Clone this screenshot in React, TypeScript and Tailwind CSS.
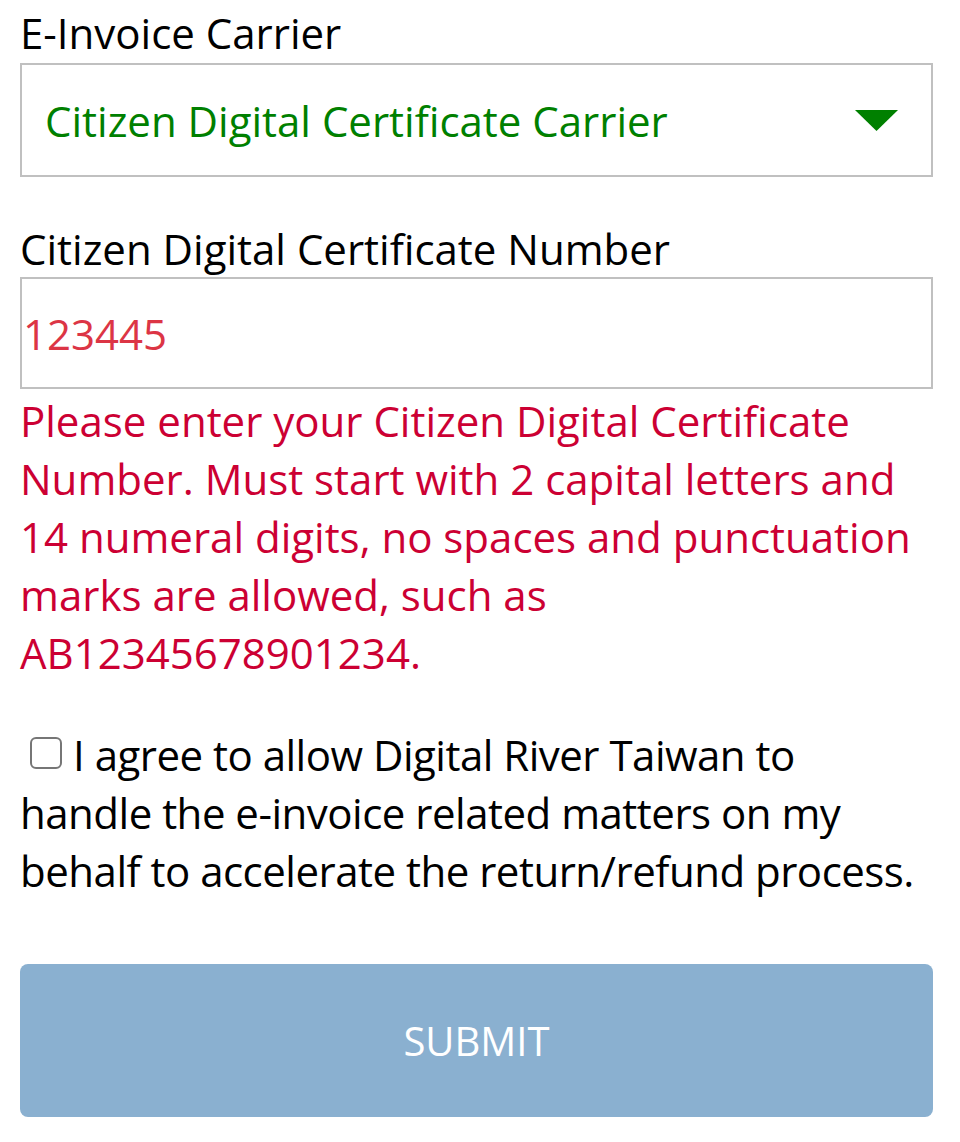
import React, { useState } from 'react';

const font = { fontFamily: '"Open Sans", "Noto Sans", sans-serif' };

export default function App() {
  const [carrier] = useState('Citizen Digital Certificate Carrier');
  const [number, setNumber] = useState('123445');
  const [agree, setAgree] = useState(false);

  return (
    <div className="w-[960px] min-h-[1142px] bg-white pl-[20px] pt-[8px]" style={font}>
      <div className="w-[913px]">
        {/* Carrier select */}
        <label className="block text-[42px] leading-[50px] text-black">E-Invoice Carrier</label>
        <div className="mt-[5px] h-[114px] border-2 border-[#c0c0c0] flex items-center justify-between pl-[23px] pr-[33px]">
          <span className="text-[42px] text-[#008000]">{carrier}</span>
          <svg width="43" height="21" viewBox="0 0 43 21">
            <polygon points="0,0 43,0 21.5,21" fill="#008000" />
          </svg>
        </div>

        {/* Certificate number */}
        <label className="block mt-[47px] text-[42px] leading-[50px] text-black">Citizen Digital Certificate Number</label>
        <div className="mt-[3px] h-[112px] border-2 border-[#c0c0c0] flex items-center pl-[1px]">
          <input
            value={number}
            onChange={(e) => setNumber(e.target.value)}
            className="w-full bg-transparent outline-none text-[42px] text-[#dc3545]"
          />
        </div>
        <p className="mt-[3px] text-[42px] leading-[58px] text-[#cc0033]">
          Please enter your Citizen Digital Certificate Number. Must start with 2 capital letters and 14 numeral digits, no spaces and punctuation marks are allowed, such as AB12345678901234.
        </p>

        {/* Agreement */}
        <label className="block mt-[44px] text-[42px] leading-[58px] tracking-[-0.5px] text-black">
          <input
            type="checkbox"
            checked={agree}
            onChange={(e) => setAgree(e.target.checked)}
            className="appearance-none w-[32px] h-[32px] ml-[10px] mr-[11px] align-[2px] border-2 border-[#767676] rounded-[6px] bg-white"
          />
          I agree to allow Digital River Taiwan to handle the e-invoice related matters on my behalf to accelerate the return/refund process.
        </label>

        <button className="mt-[64px] w-full h-[153px] rounded-[8px] bg-[#8ab0d0] text-white text-[40px] uppercase">
          Submit
        </button>
      </div>
    </div>
  );
}
